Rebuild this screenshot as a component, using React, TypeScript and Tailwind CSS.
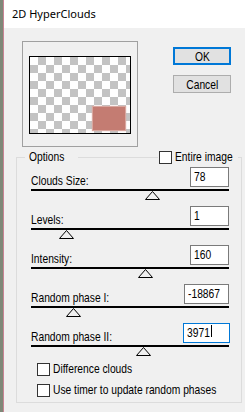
import React from "react";

const F = "font-['Liberation_Sans',Arial,sans-serif] text-[13px] leading-[13px] text-black";

function T({ children }: { children: React.ReactNode }) {
  return (
    <span className="inline-block origin-left scale-x-[0.79] whitespace-nowrap">{children}</span>
  );
}

type Row = { label: string; value: string; wcls: string; thumb: number; focused?: boolean };

const rows: Row[] = [
  { label: "Clouds Size:", value: "78", wcls: "w-[39px]", thumb: 121 },
  { label: "Levels:", value: "1", wcls: "w-[39px]", thumb: 35 },
  { label: "Intensity:", value: "160", wcls: "w-[39px]", thumb: 114 },
  { label: "Random phase I:", value: "-18867", wcls: "w-[45px]", thumb: 42 },
  { label: "Random phase II:", value: "3971", wcls: "w-[47px] -mr-[1px]", thumb: 112, focused: true },
];

function Thumb() {
  return (
    <svg width="15" height="9" viewBox="0 0 15 9" className="block">
      <polygon points="7.5,0.5 14.5,8.5 0.5,8.5" fill="#f0f0f0" stroke="#000" strokeWidth="1" />
    </svg>
  );
}

function Check({ label }: { label: string }) {
  return (
    <div className={`flex items-start ${F}`}>
      <div className="mt-[1px] w-[13px] h-[13px] border border-[#333] bg-white shrink-0" />
      <div className="ml-[3px]">
        <T>{label}</T>
      </div>
    </div>
  );
}

export default function App() {
  return (
    <div className="w-[245px] h-[412px] flex overflow-hidden">
      <div className="w-[3px] bg-[#7f8878]" />
      <div className="w-[1px] bg-[#c98494]" />
      <div className="flex-1 flex flex-col">
        <div className="h-[28px] bg-white pl-[8px] pt-[6px] font-['Noto_Sans',sans-serif] text-[11px] leading-[15px] text-black">
          2D HyperClouds
        </div>
        <div className="flex-1 bg-[#f0f0f0] flex flex-col">
          <div className="flex pt-[13px] pl-[18px]">
            <div className="w-[116px] h-[106px] border border-[#a0a0a0] pt-[14px] pl-[6px]">
              <div className="w-[102px] h-[78px] border border-black bg-[conic-gradient(#c3c3c3_25%,#fff_0_50%,#c3c3c3_0_75%,#fff_0)] bg-[length:16px_16px] flex items-end justify-end pr-[5px] pb-[3px]">
                <div className="w-[32px] h-[23px] bg-[#c47c72] shadow-[0_0_1px_1px_#d9a79f]" />
              </div>
            </div>
            <div className={`ml-[35px] mt-[6px] flex flex-col gap-[10px] ${F}`}>
              <div className="w-[58px] h-[18px] border-2 border-[#0078d7] bg-[#e1e1e1] flex items-center justify-center">
                <span className="inline-block origin-center scale-x-[0.79]">OK</span>
              </div>
              <div className="w-[58px] h-[18px] border border-[#adadad] bg-[#e1e1e1] flex items-center justify-center">
                <span className="inline-block origin-center scale-x-[0.79]">Cancel</span>
              </div>
            </div>
          </div>
          <div className="mt-[10px] ml-[12px] w-[226px] h-[246px] border border-[#dcdcdc] relative pt-[9px] pl-[14px] pr-[12px]">
            <div className={`absolute top-[-8px] left-[8px] bg-[#f0f0f0] px-[4px] ${F}`}>
              <T>Options</T>
            </div>
            <div className={`absolute top-[-8px] left-[141px] bg-[#f0f0f0] pl-[1px] pr-[3px] w-[80px]`}>
              <Check label="Entire image" />
            </div>
            <div className="flex flex-col gap-[6px]">
              {rows.map((r) => (
                <div key={r.label} className="flex flex-col">
                  <div className="flex justify-between items-end h-[20px]">
                    <div className={F}>
                      <T>{r.label}</T>
                    </div>
                    <div
                      className={`${r.wcls} h-[20px] border bg-white pl-[3px] pt-[2px] relative ${
                        r.focused ? "border-[#0078d7]" : "border-[#7a7a7a]"
                      } ${F}`}
                    >
                      <T>{r.value}</T>
                      {r.focused && (
                        <div className="absolute left-[27px] top-[1px] w-[1px] h-[12px] bg-black" />
                      )}
                    </div>
                  </div>
                  <div className="mt-[2px] h-[2px] bg-black" />
                  <div style={{ marginLeft: r.thumb - 7 }}>
                    <Thumb />
                  </div>
                </div>
              ))}
            </div>
            <div className="mt-[6px] ml-[6px] flex flex-col gap-[7px]">
              <Check label="Difference clouds" />
              <Check label="Use timer to update random phases" />
            </div>
          </div>
        </div>
      </div>
    </div>
  );
}
